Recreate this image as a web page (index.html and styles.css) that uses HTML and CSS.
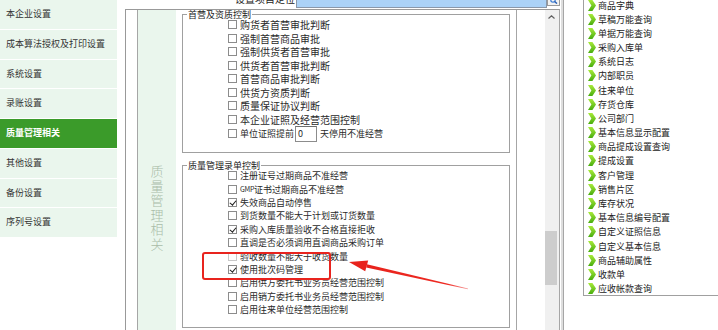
FILE: index.html
```html
<!DOCTYPE html>
<html lang="zh-CN">
<head>
<meta charset="utf-8">
<title>质量管理相关</title>
<link rel="stylesheet" href="styles.css">
</head>
<body>
<svg width="0" height="0" class="defs">
  <defs>
    <linearGradient id="chev-g" x1="0" y1="0" x2="0" y2="1">
      <stop offset="0" stop-color="#a8ea3a"/>
      <stop offset="1" stop-color="#48ad0e"/>
    </linearGradient>
    <symbol id="chev" viewBox="0 0 8 11">
      <polygon points="0,0 4.4,0 8,5.5 4.4,11 0,11 3.4,5.5" fill="url(#chev-g)"/>
    </symbol>
  </defs>
</svg>
<div class="app">
  <nav class="side">
    <div class="side-item">本企业设置</div>
    <div class="side-item">成本算法授权及打印设置</div>
    <div class="side-item">系统设置</div>
    <div class="side-item">录账设置</div>
    <div class="side-item active">质量管理相关</div>
    <div class="side-item">其他设置</div>
    <div class="side-item">备份设置</div>
    <div class="side-item">序列号设置</div>
  </nav>

  <div class="main">
    <div class="search">
      <span class="search-label">设置项目定位</span>
      <span class="search-input"></span>
      <span class="search-btn">
        <svg width="8" height="5" viewBox="0 0 8 5"><circle cx="3" cy="1" r="2.2" fill="none" stroke="#3a7bd5" stroke-width="1.2"/><path d="M4.6 2.4 L7 4.6" stroke="#2b5fb0" stroke-width="1.4"/></svg>
      </span>
    </div>
    <div class="panel">
      <div class="gutter"></div>
      <div class="content">
        <div class="vcol"><div class="vtitle">质量管理相关</div></div>
        <div class="groups">
          <fieldset class="grp grp-a">
            <legend>首营及资质控制</legend>
            <div class="rows">
              <div class="row"><span class="cb"></span>购货者首营审批判断</div>
              <div class="row"><span class="cb"></span>强制首营商品审批</div>
              <div class="row"><span class="cb"></span>强制供货者首营审批</div>
              <div class="row"><span class="cb"></span>供货者首营审批判断</div>
              <div class="row"><span class="cb"></span>首营商品审批判断</div>
              <div class="row"><span class="cb"></span>供货方资质判断</div>
              <div class="row"><span class="cb"></span>质量保证协议判断</div>
              <div class="row"><span class="cb"></span>本企业证照及经营范围控制</div>
              <div class="row row-input"><span class="cb"></span>单位证照提前<span class="num">0</span>天停用不准经营</div>
            </div>
          </fieldset>
          <fieldset class="grp grp-b">
            <legend>质量管理录单控制</legend>
            <div class="rows">
              <div class="row"><span class="cb"></span>注册证号过期商品不准经营</div>
              <div class="row"><span class="cb"></span><span class="gmp">GMP</span>证书过期商品不准经营</div>
              <div class="row"><span class="cb on"></span>失效商品自动停售</div>
              <div class="row"><span class="cb"></span>到货数量不能大于计划或订货数量</div>
              <div class="row"><span class="cb on"></span>采购入库质量验收不合格直接拒收</div>
              <div class="row"><span class="cb"></span>直调是否必须调用直调商品采购订单</div>
              <div class="row"><span class="cb faint"></span>验收数量不能大于收货数量</div>
              <div class="row"><span class="cb on"></span>使用批次码管理</div>
              <div class="row"><span class="cb"></span>启用供方委托书业务员经营范围控制</div>
              <div class="row"><span class="cb"></span>启用销方委托书业务员经营范围控制</div>
              <div class="row"><span class="cb"></span>启用往来单位经营范围控制</div>
            </div>
          </fieldset>
        </div>
      </div>
      <div class="spacer"></div>
      <div class="scrollbar">
        <div class="sb-up"><svg width="7" height="4" viewBox="0 0 7 4"><path d="M0.5 3.5 L3.5 0.8 L6.5 3.5" fill="none" stroke="#606060" stroke-width="1.2"/></svg></div>
        <div class="sb-thumb"></div>
      </div>
    </div>
  </div>

  <div class="divider"></div>

  <div class="right">
    <ul class="list">
      <li><svg class="ic"><use href="#chev"/></svg>商品字典</li>
      <li><svg class="ic"><use href="#chev"/></svg>草稿万能查询</li>
      <li><svg class="ic"><use href="#chev"/></svg>单据万能查询</li>
      <li><svg class="ic"><use href="#chev"/></svg>采购入库单</li>
      <li><svg class="ic"><use href="#chev"/></svg>系统日志</li>
      <li><svg class="ic"><use href="#chev"/></svg>内部职员</li>
      <li><svg class="ic"><use href="#chev"/></svg>往来单位</li>
      <li><svg class="ic"><use href="#chev"/></svg>存货仓库</li>
      <li><svg class="ic"><use href="#chev"/></svg>公司部门</li>
      <li><svg class="ic"><use href="#chev"/></svg>基本信息显示配置</li>
      <li><svg class="ic"><use href="#chev"/></svg>商品提成设置查询</li>
      <li><svg class="ic"><use href="#chev"/></svg>提成设置</li>
      <li><svg class="ic"><use href="#chev"/></svg>客户管理</li>
      <li><svg class="ic"><use href="#chev"/></svg>销售片区</li>
      <li><svg class="ic"><use href="#chev"/></svg>库存状况</li>
      <li><svg class="ic"><use href="#chev"/></svg>基本信息编号配置</li>
      <li><svg class="ic"><use href="#chev"/></svg>自定义证照信息</li>
      <li><svg class="ic"><use href="#chev"/></svg>自定义基本信息</li>
      <li><svg class="ic"><use href="#chev"/></svg>商品辅助属性</li>
      <li><svg class="ic"><use href="#chev"/></svg>收款单</li>
      <li><svg class="ic"><use href="#chev"/></svg>应收帐款查询</li>
    </ul>
  </div>
</div>

<div class="redbox"></div>
<svg class="annot" width="718" height="330" viewBox="0 0 718 330">
  <defs>
    <linearGradient id="fade" gradientUnits="userSpaceOnUse" x1="366" y1="266" x2="468" y2="289">
      <stop offset="0" stop-color="#e8231c"/>
      <stop offset="0.8" stop-color="#ee2a22"/>
      <stop offset="1" stop-color="#f6a0a0"/>
    </linearGradient>
  </defs>
  <polygon points="366.2,267.6 366.9,264.2 468,288.6 467.9,289.2" fill="url(#fade)"/>
  <polygon points="349,262 368.2,260.6 365.2,271.2" fill="#e8231c"/>
</svg>
</body>
</html>
```

FILE: styles.css
```css
* {
  box-sizing: border-box;
  margin: 0;
  padding: 0;
}

html, body {
  width: 718px;
  height: 330px;
  overflow: hidden;
  background: #fff;
}

body {
  position: relative;
  font-family: "Noto Sans CJK SC", "Noto Sans", sans-serif;
  color: #2a2a2a;
}

.defs {
  position: absolute;
  width: 0;
  height: 0;
}

.app {
  display: flex;
  height: 330px;
}

/* ---------- left navigation ---------- */
.side {
  width: 117px;
  flex: none;
  margin-right: 8px;
  align-self: flex-start;
}

.side-item {
  height: 29.75px;
  background: #eaf6ed;
  border-bottom: 1px solid #fff;
  font-size: 9px;
  line-height: 28.75px;
  padding-left: 6px;
  color: #333;
  white-space: nowrap;
}

.side-item.active {
  background: #3b9b2a;
  color: #fff;
  font-weight: bold;
}

/* ---------- main settings area ---------- */
.main {
  width: 435px;
  flex: none;
  display: flex;
  flex-direction: column;
}

.search {
  height: 9px;
  display: flex;
  justify-content: flex-end;
  align-items: flex-start;
}

.search-label {
  font-size: 10px;
  line-height: 10px;
  margin-top: -6px;
  margin-right: 1px;
  color: #222;
  white-space: nowrap;
}

.search-input {
  width: 251px;
  height: 14px;
  margin-top: -6px;
  background: #abd2f7;
  border: 1px solid #8a98aa;
}

.search-btn {
  width: 13px;
  height: 13px;
  margin-top: -7px;
  border: 1px solid #9a9a9a;
  background: #f2f2f2;
  display: flex;
  align-items: flex-end;
  justify-content: center;
  padding-bottom: 1px;
}

.panel {
  flex: 1;
  min-height: 0;
  display: flex;
  border-top: 1px solid #999;
  border-left: 1px solid #999;
  border-right: 1px solid #a6a6a6;
}

.gutter {
  width: 11px;
  flex: none;
}

.content {
  width: 380px;
  flex: none;
  display: flex;
  border-left: 1px solid #a6a6a6;
  border-right: 1px solid #a6a6a6;
}

.vcol {
  width: 38px;
  flex: none;
  background: #eaf6ed;
  display: flex;
  justify-content: center;
  padding-top: 155px;
}

.vtitle {
  writing-mode: vertical-rl;
  font-size: 13px;
  line-height: 13px;
  letter-spacing: 1.5px;
  color: #a9bca8;
  font-weight: 300;
}

.groups {
  padding: 0 6px;
  display: flex;
  flex-direction: column;
}

.grp {
  width: 328px;
  border: 1px solid #a0a0a0;
  padding: 0;
  margin: 0;
  min-width: 0;
}

.grp-b {
  margin-top: 8px;
}

.grp legend {
  font-size: 9px;
  line-height: 9px;
  margin-left: 4px;
  padding: 0 1px;
  color: #1a1a1a;
}

.rows {
  margin-top: -1px;
  padding: 0 0 11px 45px;
}

.row {
  display: flex;
  align-items: center;
  height: 13.5px;
  font-size: 10px;
  line-height: 13px;
  white-space: nowrap;
  color: #2a2a2a;
}

.grp-b .row {
  height: 13.4px;
  font-size: 9px;
}

.row-input {
  height: 15px;
  font-size: 9px;
}

.num {
  width: 22px;
  height: 16px;
  margin: 0 3px 0 1px;
  border: 1px solid #8c8c8c;
  border-top-color: #6e6e6e;
  background: #fff;
  font-size: 9px;
  line-height: 14px;
  padding-left: 2px;
  flex: none;
}

.gmp {
  font-size: 7px;
  letter-spacing: -0.3px;
}

.cb {
  position: relative;
  width: 9px;
  height: 9px;
  flex: none;
  border: 1px solid #8c8c8c;
  background: #fff;
  margin-right: 3px;
}

.cb.faint {
  border-color: #c8c8c8;
}

.cb.on::after {
  content: "";
  position: absolute;
  left: 2.2px;
  top: -0.2px;
  width: 2.6px;
  height: 5px;
  border: solid #1e1e1e;
  border-width: 0 1.3px 1.3px 0;
  transform: rotate(40deg);
}

.spacer {
  width: 28px;
  flex: none;
}

.scrollbar {
  width: 14px;
  flex: none;
  background: #f0f0f0;
  display: flex;
  flex-direction: column;
}

.sb-up {
  height: 14px;
  display: flex;
  align-items: center;
  justify-content: center;
  padding-right: 1px;
}

.sb-thumb {
  margin-top: 207px;
  width: 12px;
  height: 54px;
  background: #cdcdcd;
}

/* ---------- divider & right list ---------- */
.divider {
  width: 4px;
  flex: none;
  border-right: 1px solid #a6a6a6;
  box-shadow: inset -2px 0 0 #dedede;
}

.right {
  flex: 1;
  padding-left: 19px;
  min-width: 0;
}

.list {
  list-style: none;
  margin-top: -2px;
  height: 298px;
  border-left: 1px solid #a0a0a0;
  border-bottom: 1px solid #a0a0a0;
  overflow: hidden;
}

.list li {
  height: 14.18px;
  display: flex;
  align-items: center;
  padding-left: 4px;
  font-size: 9px;
  line-height: 11px;
  color: #222;
  white-space: nowrap;
}

.ic {
  width: 8px;
  height: 11px;
  flex: none;
  margin-right: 2px;
}

/* ---------- annotation overlay ---------- */
.redbox {
  position: absolute;
  left: 202px;
  top: 252px;
  width: 129px;
  height: 28px;
  border: 2px solid #e8241e;
  border-radius: 3px;
  pointer-events: none;
}

.annot {
  position: absolute;
  left: 0;
  top: 0;
  pointer-events: none;
}
```
